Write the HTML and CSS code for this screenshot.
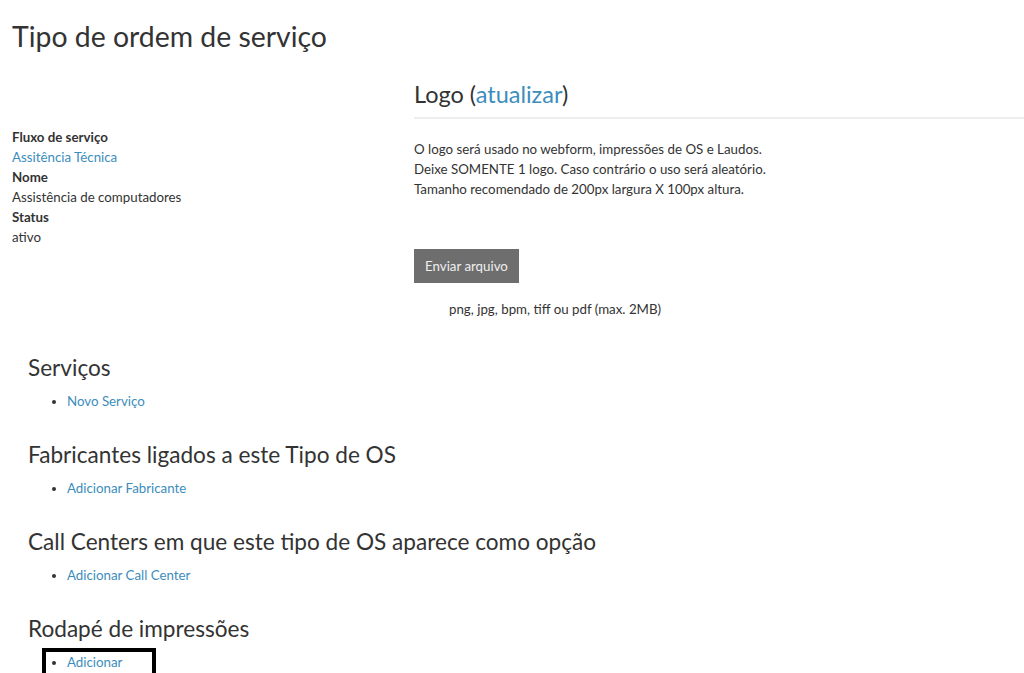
FILE: index.html
```html
<!DOCTYPE html>
<html lang="pt">
<head>
<meta charset="utf-8">
<title>Tipo de ordem de serviço</title>
<link rel="stylesheet" href="styles.css">
</head>
<body>
<div class="page">
  <h1 class="page-title">Tipo de ordem de serviço</h1>
  <div class="top-row">
    <div class="details">
      <dl class="props">
        <dt>Fluxo de serviço</dt>
        <dd><a href="#">Assitência Técnica</a></dd>
        <dt>Nome</dt>
        <dd>Assistência de computadores</dd>
        <dt>Status</dt>
        <dd>ativo</dd>
      </dl>
    </div>
    <div class="logo-box">
      <h2 class="logo-title">Logo (<a href="#">atualizar</a>)</h2>
      <p class="logo-text">O logo será usado no webform, impressões de OS e Laudos.<br>Deixe SOMENTE 1 logo. Caso contrário o uso será aleatório.<br>Tamanho recomendado de 200px largura X 100px altura.</p>
      <button class="upload-btn" type="button">Enviar arquivo</button>
      <p class="upload-hint">png, jpg, bpm, tiff ou pdf (max. 2MB)</p>
    </div>
  </div>
  <div class="sections">
    <section class="sec">
      <h2 class="sec-title">Serviços</h2>
      <ul class="sec-list"><li><a href="#">Novo Serviço</a></li></ul>
    </section>
    <section class="sec">
      <h2 class="sec-title">Fabricantes ligados a este Tipo de OS</h2>
      <ul class="sec-list"><li><a href="#">Adicionar Fabricante</a></li></ul>
    </section>
    <section class="sec">
      <h2 class="sec-title">Call Centers em que este tipo de OS aparece como opção</h2>
      <ul class="sec-list"><li><a href="#">Adicionar Call Center</a></li></ul>
    </section>
    <section class="sec">
      <h2 class="sec-title">Rodapé de impressões</h2>
      <ul class="sec-list focused"><li><a href="#">Adicionar</a></li></ul>
    </section>
  </div>
</div>
</body>
</html>
```

FILE: styles.css
```css
html, body {
  margin: 0;
  padding: 0;
  background: #fff;
}
body {
  font-family: Lato, "Liberation Sans", sans-serif;
  font-size: 13.3px;
  line-height: 20px;
  color: #333;
}
a {
  color: #3c8dbc;
  text-decoration: none;
}
.page {
  padding: 0 0 0 12px;
}
.page-title {
  margin: 0;
  padding-top: 18px;
  font-size: 28.4px;
  line-height: 36px;
  font-weight: 400;
  color: #333;
}
.top-row {
  display: grid;
  grid-template-columns: 402px 1fr;
}
.details {
  padding-top: 73px;
}
.props {
  margin: 0;
}
.props dt {
  font-weight: 700;
}
.props dd {
  margin: 0;
}
.logo-box {
  padding-top: 25px;
}
.logo-title {
  margin: 0;
  font-size: 23.5px;
  line-height: 30px;
  font-weight: 400;
  padding-bottom: 8px;
  border-bottom: 2px solid #eee;
}
.logo-text {
  margin: 20px 0 0;
}
.upload-btn {
  display: block;
  margin-top: 50px;
  height: 34px;
  padding: 0 11px;
  border: 0;
  background: #6e6e6e;
  color: #eee;
  font-family: inherit;
  font-size: 13.3px;
}
.upload-hint {
  margin: 16px 0 0 35px;
}
.sections {
  padding: 34px 0 0 16px;
}
.sec-title {
  margin: 0;
  font-size: 22.6px;
  line-height: 30px;
  font-weight: 400;
}
.sec-list {
  margin: 8px 0 29px;
  padding-left: 39px;
}
.sec-list li {
  line-height: 20px;
}
.focused {
  display: inline-block;
  outline: 4px solid #000;
  margin-left: 18px;
  padding-left: 21px;
  padding-right: 30px;
  padding-bottom: 12px;
}
```
